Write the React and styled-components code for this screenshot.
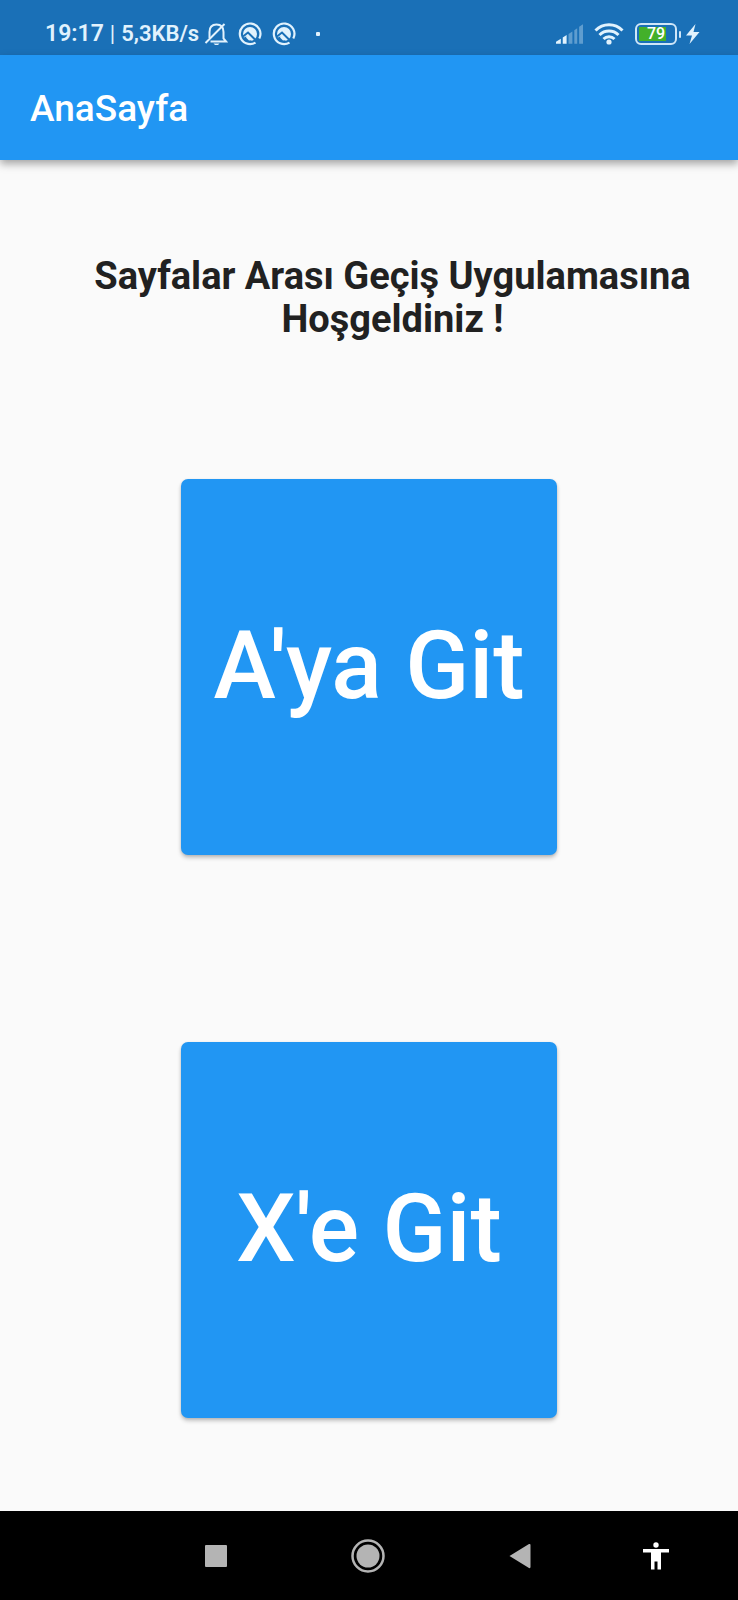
import React from "react";
import styled, { createGlobalStyle } from "styled-components";

const GlobalStyle = createGlobalStyle`
  * { box-sizing: border-box; }
  body {
    margin: 0;
    background: #fafafa;
    font-family: Roboto, "Noto Sans", sans-serif;
  }
`;

const Screen = styled.div`
  min-height: 100vh;
  display: flex;
  flex-direction: column;
`;

const StatusBar = styled.div`
  height: 55px;
  padding: 13px 38px 0 45px;
  display: flex;
  justify-content: space-between;
  align-items: center;
  background: #1a70b7;
  color: #e1f2fd;
`;

const StatusGroup = styled.div`
  display: flex;
  align-items: center;
  gap: ${(p) => p.$gap}px;
`;

const StatusText = styled.div`
  display: flex;
  align-items: baseline;
  gap: 6px;
  font-size: 22px;
  line-height: 28px;
  font-weight: 600;
  white-space: nowrap;
`;

const Clock = styled.span`
  font-size: 23px;
`;

const Divider = styled.span`
  font-weight: 400;
`;

const Icon = styled.svg`
  display: block;
  flex: none;
`;

const Dot = styled.span`
  width: 4px;
  height: 4px;
  margin-left: 10px;
  border-radius: 1px;
  background: currentColor;
`;

const Battery = styled.div`
  display: flex;
  align-items: center;
  gap: 2px;
`;

const BatteryShell = styled.div`
  width: 42px;
  height: 22px;
  padding: 2px;
  border: 2px solid #cfe6f8;
  border-radius: 6px;
`;

const BatteryLevel = styled.div`
  height: 100%;
  display: flex;
  align-items: center;
  justify-content: center;
  background: linear-gradient(to right, #43b02a 78%, transparent 78%);
  color: #ffffff;
  font-size: 16px;
  line-height: 16px;
  font-weight: 500;
`;

const BatteryTip = styled.span`
  width: 2px;
  height: 7px;
  border-radius: 1px;
  background: #cfe6f8;
`;

const AppBar = styled.header`
  height: 105px;
  padding: 2px 30px 0;
  display: flex;
  align-items: center;
  background: #2196f3;
  color: #ffffff;
  box-shadow: 0 4px 8px rgba(0, 0, 0, 0.34);
`;

const Title = styled.h1`
  margin: 0;
  font-size: 37px;
  line-height: 44px;
  font-weight: 500;
`;

const Content = styled.main`
  flex: 1;
  padding: 95px 47px 93px 94px;
`;

const Welcome = styled.h2`
  margin: 0 0 138px;
  color: #212121;
  font-size: 38px;
  line-height: 43px;
  font-weight: 700;
  text-align: center;
`;

const Actions = styled.div`
  margin: 0 0 0 -47px;
  display: flex;
  flex-direction: column;
  align-items: center;
  gap: 187px;
`;

const PageButton = styled.button`
  width: 376px;
  max-width: 100%;
  aspect-ratio: 1;
  padding: 0 0 2px;
  border: 0;
  border-radius: 7px;
  background: #2196f3;
  color: #ffffff;
  font-family: inherit;
  font-size: 94px;
  line-height: 110px;
  font-weight: 500;
  white-space: nowrap;
  box-shadow: 0 3px 4px rgba(0, 0, 0, 0.2), 0 1px 3px rgba(0, 0, 0, 0.12);
`;

const NavBar = styled.nav`
  height: 89px;
  display: grid;
  grid-template-columns: 152fr 152fr 152fr 120fr;
  padding: 0 3% 0 19%;
  background: #000000;
`;

const NavButton = styled.button`
  padding: 0;
  border: 0;
  background: transparent;
  color: ${(p) => p.$color || "#b4b4b4"};
  display: flex;
  align-items: center;
  justify-content: center;
`;

function MutedBell() {
  return (
    <Icon width="24" height="24" viewBox="0 0 24 24" fill="none" stroke="currentColor" strokeWidth="2" aria-hidden="true">
      <path d="M5.500 16V10C5.500 5.500 8 2.500 12.500 2.500C17 2.500 19.500 5.500 19.500 10V16.500L22 19.500H6.500" />
      <path d="M1.500 21L20.500 2" />
      <path d="M9.500 21.500H15.500L14 23H11Z" fill="currentColor" stroke="none" />
    </Icon>
  );
}

function AppNotice() {
  return (
    <Icon width="24" height="24" viewBox="0 0 24 24" aria-hidden="true">
      <path
        d="M17.500 20.600A10.300 10.300 0 1 1 21.300 16.500"
        fill="none"
        stroke="currentColor"
        strokeWidth="2.200"
      />
      <circle cx="12" cy="12" r="7" fill="currentColor" />
      <path d="M5 14.500L10 10.500L17.500 18" fill="none" stroke="#1a70b7" strokeWidth="2" />
      <path d="M5 16L8 14.500L15 20H8Z" fill="#1a70b7" />
      <path d="M8 15.500L10 13.500L14.500 18L11 18.500Z" fill="currentColor" />
    </Icon>
  );
}

function Signal() {
  return (
    <Icon width="27" height="20" viewBox="0 0 28 20" fill="currentColor" aria-hidden="true">
      <path d="M0 20V18L5 15V20Z" />
      <path d="M7 20V13.500L11 11V20Z" />
      <g opacity="0.35">
        <path d="M13 20V10L17 7.500V20Z" />
        <path d="M19 20V6L22 4V20Z" />
        <path d="M24 20V2.500L28 0V20Z" />
      </g>
    </Icon>
  );
}

function Wifi() {
  return (
    <Icon width="30" height="22" viewBox="0 0 30 22" fill="none" stroke="currentColor" strokeWidth="3" aria-hidden="true">
      <path d="M1.500 7.500A19 19 0 0 1 28.500 7.500" />
      <path d="M5.500 12A13.500 13.500 0 0 1 24.500 12" />
      <path d="M9.500 16A8 8 0 0 1 20.500 16" />
      <circle cx="15" cy="19" r="2.600" fill="currentColor" stroke="none" />
    </Icon>
  );
}

function Bolt() {
  return (
    <Icon width="14" height="20" viewBox="0 0 14 20" fill="currentColor" aria-hidden="true">
      <path d="M9.500 0L0 11.500H6L3.500 20L13.500 8H7.500Z" />
    </Icon>
  );
}

export default function App() {
  return (
    <Screen>
      <GlobalStyle />
      <StatusBar>
        <StatusGroup $gap={10}>
          <StatusGroup $gap={5}>
            <StatusText>
              <Clock>19:17</Clock>
              <Divider>|</Divider>
              <span>5,3KB/s</span>
            </StatusText>
            <MutedBell />
          </StatusGroup>
          <AppNotice />
          <AppNotice />
          <Dot />
        </StatusGroup>
        <StatusGroup $gap={11}>
          <Signal />
          <Wifi />
          <StatusGroup $gap={5}>
            <Battery>
              <BatteryShell>
                <BatteryLevel>79</BatteryLevel>
              </BatteryShell>
              <BatteryTip />
            </Battery>
            <Bolt />
          </StatusGroup>
        </StatusGroup>
      </StatusBar>
      <AppBar>
        <Title>AnaSayfa</Title>
      </AppBar>
      <Content>
        <Welcome>Sayfalar Arası Geçiş Uygulamasına Hoşgeldiniz !</Welcome>
        <Actions>
          <PageButton type="button">A'ya Git</PageButton>
          <PageButton type="button">X'e Git</PageButton>
        </Actions>
      </Content>
      <NavBar>
        <NavButton type="button" aria-label="Son uygulamalar">
          <Icon width="22" height="22" viewBox="0 0 22 22" fill="currentColor">
            <rect width="22" height="22" rx="1" />
          </Icon>
        </NavButton>
        <NavButton type="button" aria-label="Ana ekran">
          <Icon width="34" height="34" viewBox="0 0 34 34">
            <circle cx="17" cy="17" r="15.500" fill="none" stroke="currentColor" strokeWidth="2.500" />
            <circle cx="17" cy="17" r="11.500" fill="currentColor" />
          </Icon>
        </NavButton>
        <NavButton type="button" aria-label="Geri">
          <Icon width="22" height="26" viewBox="0 0 22 26" fill="currentColor">
            <path d="M0.500 13L20 1Q21.500 0.500 21.500 2V24Q21.500 25.500 20 25Z" />
          </Icon>
        </NavButton>
        <NavButton type="button" aria-label="Erişilebilirlik" $color="#ffffff">
          <Icon width="26" height="28" viewBox="0 0 26 28" fill="currentColor">
            <circle cx="13" cy="3" r="2.700" />
            <path d="M0 7H26V10.500H18V27.500H14.500V19.500H11.500V27.500H8V10.500H0Z" />
          </Icon>
        </NavButton>
      </NavBar>
    </Screen>
  );
}
